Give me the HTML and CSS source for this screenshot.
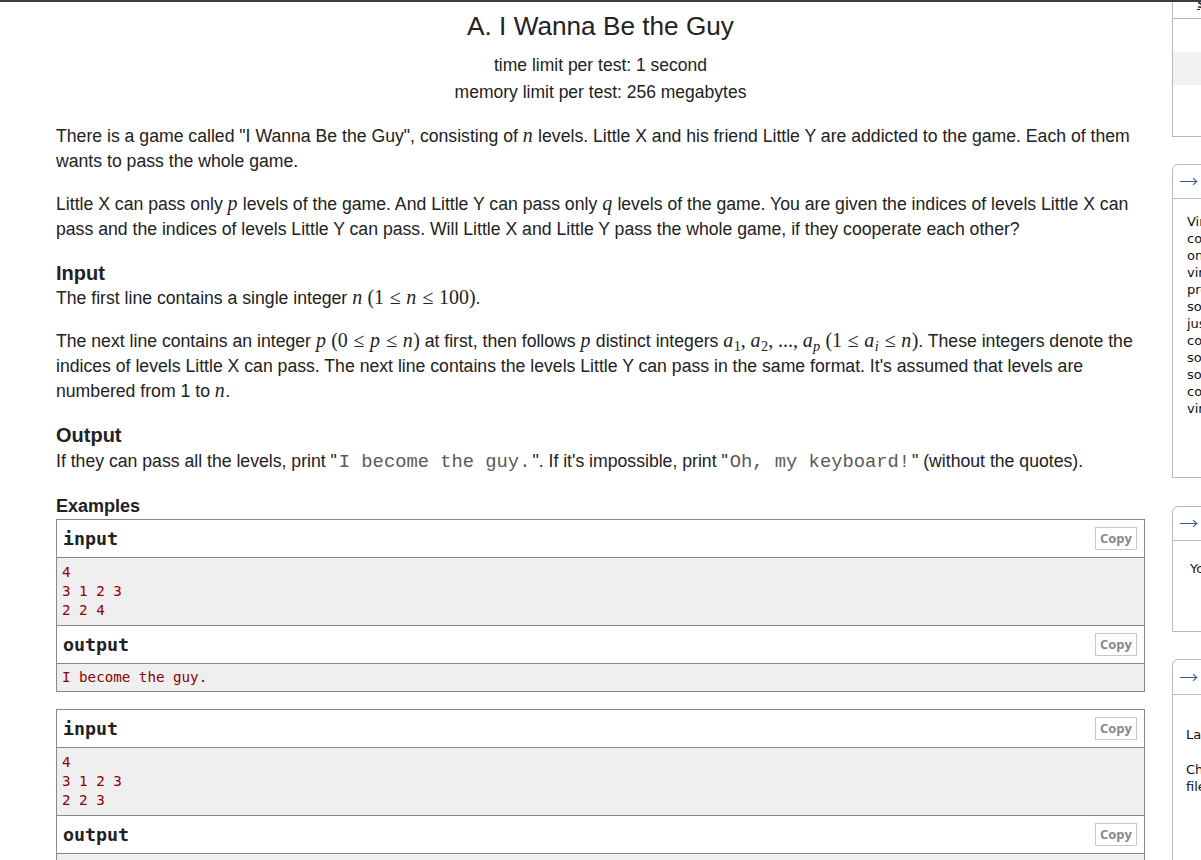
FILE: index.html
```html
<!DOCTYPE html>
<html lang="en">
<head>
<meta charset="utf-8">
<title>A. I Wanna Be the Guy</title>
<link rel="stylesheet" href="styles.css">
</head>
<body>
<div class="topbar"></div>
<div class="page">
  <div class="main">
    <div class="header">
      <div class="title">A. I Wanna Be the Guy</div>
      <div class="limit first">time limit per test: 1 second</div>
      <div class="limit">memory limit per test: 256 megabytes</div>
    </div>

    <p>There is a game called "I Wanna Be the Guy", consisting of <span class="m"><i>n</i></span> levels. Little X and his friend Little Y are addicted to the game. Each of them wants to pass the whole game.</p>
    <p>Little X can pass only <span class="m"><i>p</i></span> levels of the game. And Little Y can pass only <span class="m"><i>q</i></span> levels of the game. You are given the indices of levels Little X can pass and the indices of levels Little Y can pass. Will Little X and Little Y pass the whole game, if they cooperate each other?</p>

    <div class="sec-title">Input</div>
    <p>The first line contains a single integer <span class="m"><i>n</i></span> <span class="m">(1<span class="rel">≤</span><i>n</i><span class="rel">≤</span>100)</span>.</p>
    <p>The next line contains an integer <span class="m"><i>p</i></span> <span class="m">(0<span class="rel">≤</span><i>p</i><span class="rel">≤</span><i>n</i>)</span> at first, then follows <span class="m"><i>p</i></span> distinct integers <span class="m"><i>a</i><sub>1</sub>,<span class="cm"></span><i>a</i><sub>2</sub>,<span class="cm"></span>...,<span class="cm"></span><i>a</i><sub><i>p</i></sub></span> <span class="m">(1<span class="rel">≤</span><i>a</i><sub><i>i</i></sub><span class="rel">≤</span><i>n</i>)</span>. These integers denote the indices of levels Little X can pass. The next line contains the levels Little Y can pass in the same format. It's assumed that levels are numbered from 1 to <span class="m"><i>n</i></span>.</p>

    <div class="sec-title">Output</div>
    <p>If they can pass all the levels, print "<code class="tt">I become the guy.</code>". If it's impossible, print "<code class="tt">Oh, my keyboard!</code>" (without the quotes).</p>

    <div class="ex-title">Examples</div>
    <div class="ex">
      <div class="ex-head"><span>input</span><span class="copy">Copy</span></div>
      <pre class="ex-data">4
3 1 2 3
2 2 4</pre>
      <div class="ex-head"><span>output</span><span class="copy">Copy</span></div>
      <pre class="ex-data last">I become the guy.</pre>
    </div>
    <div class="ex">
      <div class="ex-head"><span>input</span><span class="copy">Copy</span></div>
      <pre class="ex-data">4
3 1 2 3
2 2 3</pre>
      <div class="ex-head"><span>output</span><span class="copy">Copy</span></div>
      <pre class="ex-data last">Oh, my keyboard!</pre>
    </div>
  </div>

  <div class="sidebar">
    <div class="sb-box sb-first">
      <div class="sb-row r1"><span class="sb-glyph">$</span></div>
      <div class="sb-row r2"></div>
      <div class="sb-row r3"></div>
      <div class="sb-row r4"></div>
    </div>

    <div class="sb-box rounded b2">
      <div class="sb-head"><svg class="arrow" width="18" height="9" viewBox="0 0 18 9"><path d="M0 4.5H16.5M13 1.2L16.8 4.5L13 7.8" fill="none" stroke="#3b5998" stroke-width="1.1"/></svg><span class="sb-title">Virtual participation</span></div>
      <div class="sb-body">
        <div>Virtual contest is a way to take part in past</div>
        <div>contest, as close as possible to participation</div>
        <div>on time. It is supported only ICPC mode for</div>
        <div>virtual contests. If you've seen these</div>
        <div>problems, a virtual contest is not for you -</div>
        <div>solve these problems in the archive. If you</div>
        <div>just want to solve some problem from a</div>
        <div>contest, a virtual contest is not for you -</div>
        <div>solve this problem in the archive. Never use</div>
        <div>someone else's code, read the tutorials or</div>
        <div>communicate with other person during a</div>
        <div>virtual contest.</div>
      </div>
    </div>

    <div class="sb-box rounded b3">
      <div class="sb-head"><svg class="arrow" width="18" height="9" viewBox="0 0 18 9"><path d="M0 4.5H16.5M13 1.2L16.8 4.5L13 7.8" fill="none" stroke="#3b5998" stroke-width="1.1"/></svg><span class="sb-title">Clone Contest to Mashup</span></div>
      <div class="sb-body">You can clone this contest to a mashup.</div>
    </div>

    <div class="sb-box rounded b4">
      <div class="sb-head"><svg class="arrow" width="18" height="9" viewBox="0 0 18 9"><path d="M0 4.5H16.5M13 1.2L16.8 4.5L13 7.8" fill="none" stroke="#3b5998" stroke-width="1.1"/></svg><span class="sb-title">Submit?</span></div>
      <div class="sb-body">
        <div>Language:</div>
        <div class="gap">Choose</div>
        <div>file:</div>
      </div>
    </div>
  </div>
</div>
</body>
</html>
```

FILE: styles.css
```css
html, body {
  margin: 0;
  padding: 0;
  overflow: hidden;
  background: #ffffff;
}

body {
  font-family: "Liberation Sans", Arial, sans-serif;
  color: #222222;
}

.topbar {
  height: 2px;
  background: #3e3749;
}

.page {
  display: flex;
  align-items: flex-start;
}

.main {
  flex: none;
  width: 1089px;
  margin-left: 56px;
}

/* header */
.header {
  text-align: center;
  margin-bottom: 17.5px;
}

.title {
  font-size: 26.2px;
  line-height: 32px;
  margin-top: 8px;
  color: #222222;
}

.limit {
  font-size: 17.5px;
  line-height: 27px;
}

.limit.first {
  margin-top: 10px;
}

/* statement */
p {
  font-size: 17.65px;
  line-height: 25px;
  margin: 0 0 18px 0;
}

.sec-title {
  font-size: 20px;
  font-weight: bold;
  line-height: 26.5px;
}

.ex-title {
  font-size: 18px;
  font-weight: bold;
  line-height: 26px;
}

.m {
  font-family: "Liberation Serif", "Times New Roman", serif;
  font-size: 1.13em;
  line-height: 1;
  white-space: nowrap;
}

.m i {
  font-style: italic;
  padding-right: 0.02em;
}

.m sub {
  font-size: 0.72em;
  vertical-align: -0.3em;
  line-height: 0;
}

.rel {
  display: inline-block;
  width: 0.72em;
  text-align: center;
  margin: 0 0.2em;
}

.cm {
  display: inline-block;
  width: 0.24em;
}

.tt {
  font-family: "Courier New", Courier, "Liberation Mono", monospace;
  font-size: 18.8px;
  color: #5a5a5a;
  padding: 0 2px;
}

/* examples */
.ex {
  border: 1px solid #888888;
  margin-bottom: 17px;
}

.ex-head {
  display: flex;
  justify-content: space-between;
  align-items: center;
  height: 37px;
  padding: 0 7px 0 6px;
  border-bottom: 1px solid #888888;
  font-family: "DejaVu Sans Mono", monospace;
  font-weight: bold;
  font-size: 18.3px;
  color: #222222;
}

.copy {
  box-sizing: border-box;
  width: 42px;
  height: 23px;
  line-height: 21px;
  text-align: center;
  border: 1px solid #c8c8c8;
  font-family: "Open Sans", "DejaVu Sans", sans-serif;
  font-weight: bold;
  font-size: 13px;
  color: #888888;
}

.ex-data {
  margin: 0;
  padding: 5px 5px 5px 5px;
  background: #efefef;
  border-bottom: 1px solid #888888;
  font-family: "DejaVu Sans Mono", monospace;
  font-size: 14.2px;
  line-height: 19px;
  color: #8b0000;
}

.ex-data.last {
  padding: 4px 5px;
  border-bottom: none;
}

/* sidebar */
.sidebar {
  flex: none;
  width: 29px;
  margin-left: 27px;
  overflow: hidden;
}

.sb-box {
  width: 300px;
  border: 1px solid #b9b9b9;
  font-family: "DejaVu Sans", Verdana, sans-serif;
  font-size: 13px;
  color: #111111;
  white-space: nowrap;
}

.sb-first {
  border-top: none;
}

.sb-row.r1 {
  height: 16px;
  border-bottom: 1px solid #b9b9b9;
  overflow: hidden;
}

.sb-glyph {
  display: block;
  padding-left: 24px;
  margin-top: -6px;
  font-weight: bold;
  font-size: 13px;
  line-height: 16px;
  color: #1b2e55;
  text-decoration: underline;
}

.sb-row.r2 {
  height: 33px;
}

.sb-row.r3 {
  height: 33px;
  background: #f1f1f1;
}

.sb-row.r4 {
  height: 51px;
}

.rounded {
  border-top-left-radius: 6px;
}

.sb-head {
  display: flex;
  align-items: center;
  height: 33px;
  padding-left: 7px;
  border-bottom: 1px solid #b9b9b9;
  color: #3b5998;
}

.arrow {
  display: block;
  flex: none;
}

.sb-title {
  margin-left: 12px;
  font-weight: bold;
}

.b2 {
  margin-top: 27px;
  height: 312px;
}

.b2 .sb-body {
  padding: 13.5px 0 0 14px;
  line-height: 17px;
}

.b3 {
  margin-top: 28px;
  height: 124px;
}

.b3 .sb-body {
  padding: 18.5px 0 0 17px;
  line-height: 17px;
}

.b4 {
  margin-top: 27px;
  height: 300px;
}

.b4 .sb-head {
  height: 34px;
}

.b4 .sb-body {
  padding: 30.5px 0 0 13px;
  line-height: 17px;
}

.b4 .gap {
  margin-top: 19px;
  line-height: 16px;
}
```
